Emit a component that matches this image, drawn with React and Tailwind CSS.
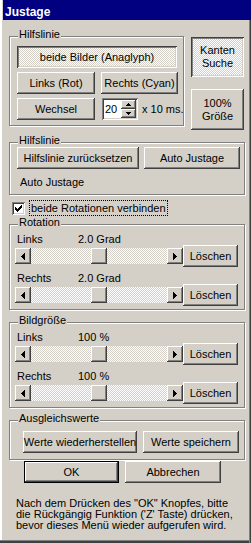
import React from 'react';

const raised = 'shadow-[inset_-1px_-1px_#404040,inset_1px_1px_#fff,inset_-2px_-2px_#808080,inset_2px_2px_#d4d0c8]';
const pressed = 'shadow-[inset_1px_1px_#404040,inset_-1px_-1px_#fff,inset_2px_2px_#808080,inset_-2px_-2px_#d4d0c8]';
const sunken = 'shadow-[inset_1px_1px_#808080,inset_-1px_-1px_#fff,inset_2px_2px_#404040,inset_-2px_-2px_#d4d0c8]';
const dither = 'bg-[image:repeating-conic-gradient(#d4d0c8_0%_25%,#fff_0%_50%)] bg-[length:2px_2px]';

function Btn({ className = '', down = false, children }) {
    return (
        <div className={`flex shrink-0 items-center justify-center whitespace-nowrap text-center leading-[13px] ${down ? `${pressed} ${dither}` : `${raised} bg-[#d4d0c8]`} ${className}`}>
            {children}
        </div>
    );
}

function Group({ title, className = '', children }) {
    return (
        <div className={`relative border border-[#808080] shadow-[inset_1px_1px_#fff,1px_1px_#fff] ${className}`}>
            <span className="absolute left-[8px] top-[-9px] bg-[#d4d0c8] px-[1px] leading-[13px]">{title}</span>
            {children}
        </div>
    );
}

function Arrow({ dir }) {
    return (
        <div className={`flex h-[16px] w-[16px] shrink-0 items-center justify-center bg-[#d4d0c8] ${raised}`}>
            <svg width="4" height="7" viewBox="0 0 4 7" shapeRendering="crispEdges">
                {dir === 'left'
                    ? <path d="M3 0h1v7h-1z M2 1h1v5h-1z M1 2h1v3h-1z M0 3h1v1h-1z" fill="#000" />
                    : <path d="M0 0h1v7h-1z M1 1h1v5h-1z M2 2h1v3h-1z M3 3h1v1h-1z" fill="#000" />}
            </svg>
        </div>
    );
}

function SliderRow() {
    return (
        <div className="flex items-center">
            <div className="flex h-[16px] w-[168px]">
                <Arrow dir="left" />
                <div className={`flex flex-1 justify-center ${dither}`}>
                    <div className={`h-[16px] w-[16px] bg-[#d4d0c8] ${raised}`} />
                </div>
                <Arrow dir="right" />
            </div>
            <Btn className="h-[22px] w-[55px]">Löschen</Btn>
        </div>
    );
}

function SliderLabel({ name, value, className = '' }) {
    return (
        <div className={`ml-[2px] flex leading-[12px] ${className}`}>
            <span className="w-[61px]">{name}</span>
            <span>{value}</span>
        </div>
    );
}

function Spin() {
    return (
        <div className={`flex h-[22px] w-[36px] bg-white p-[2px] ${sunken}`}>
            <div className="flex flex-1 items-center pl-[1px] leading-[13px]">20</div>
            <div className="flex w-[15px] flex-col">
                <div className={`flex h-[9px] items-center justify-center bg-[#d4d0c8] ${raised}`}>
                    <svg width="5" height="3" viewBox="0 0 5 3" shapeRendering="crispEdges"><path d="M2 0h1v1h-1z M1 1h3v1h-3z M0 2h5v1h-5z" fill="#000" /></svg>
                </div>
                <div className={`flex h-[9px] items-center justify-center bg-[#d4d0c8] ${raised}`}>
                    <svg width="5" height="3" viewBox="0 0 5 3" shapeRendering="crispEdges"><path d="M0 0h5v1h-5z M1 1h3v1h-3z M2 2h1v1h-1z" fill="#000" /></svg>
                </div>
            </div>
        </div>
    );
}

export default function App() {
    return (
        <div className="relative flex h-[543px] w-[251px] flex-col overflow-hidden bg-[#d4d0c8] text-[11px] text-black [font-family:'Liberation_Sans',Arial,sans-serif] shadow-[inset_-1px_0_#404040,inset_-2px_0_#808080,inset_0_-1px_#404040,inset_0_-2px_#404040,inset_0_-3px_#808080,inset_2px_0_#fff]">
            {/* title */}
            <div className="ml-[3px] flex h-[20px] shrink-0 items-center bg-[#000080] pl-[2px] pt-[3px] text-[12px] font-bold text-white">
                Justage
            </div>

            {/* top section */}
            <div className="ml-[9px] mt-[16px] flex items-start">
                <Group title="Hilfslinie" className="w-[175px] pb-[5px] pl-[7px] pt-[9px]">
                    <Btn down className="h-[22px] w-[160px]">beide Bilder (Anaglyph)</Btn>
                    <div className="mt-[4px] flex">
                        <Btn className="h-[22px] w-[78px]">Links (Rot)</Btn>
                        <Btn className="ml-[6px] h-[22px] w-[77px]">Rechts (Cyan)</Btn>
                    </div>
                    <div className="mt-[4px] flex items-center">
                        <Btn className="h-[22px] w-[78px]">Wechsel</Btn>
                        <div className="ml-[7px]"><Spin /></div>
                        <span className="ml-[4px] whitespace-nowrap leading-[13px]">x 10 ms.</span>
                    </div>
                </Group>
                <div className="ml-[7px] mt-[1px] flex flex-col">
                    <Btn down className="h-[40px] w-[53px]">Kanten<br />Suche</Btn>
                    <Btn className="mt-[12px] h-[41px] w-[53px]">100%<br />Größe</Btn>
                </div>
            </div>

            {/* Hilfslinie 2 */}
            <Group title="Hilfslinie" className="ml-[9px] mt-[12px] w-[236px] pb-[5px] pl-[7px] pt-[4px]">
                <div className="flex">
                    <Btn className="h-[22px] w-[122px]">Hilfslinie zurücksetzen</Btn>
                    <Btn className="ml-[5px] h-[22px] w-[96px]">Auto Justage</Btn>
                </div>
                <div className="ml-[3px] mt-[7px] leading-[13px]">Auto Justage</div>
            </Group>

            {/* checkbox */}
            <div className="ml-[12px] mt-[5px] flex h-[16px] items-center">
                <div className={`flex h-[13px] w-[13px] items-center justify-center bg-white ${sunken}`}>
                    <svg width="7" height="7" viewBox="0 0 7 7" shapeRendering="crispEdges">
                        <path d="M0 2h1v3h-1z M1 3h1v3h-1z M2 4h1v3h-1z M3 3h1v3h-1z M4 2h1v3h-1z M5 1h1v3h-1z M6 0h1v3h-1z" fill="#000" />
                    </svg>
                </div>
                <div className="ml-[4px] h-[16px] border border-dotted border-black px-[1px] leading-[14px]">beide Rotationen verbinden</div>
            </div>

            {/* Rotation */}
            <Group title="Rotation" className="ml-[9px] mt-[8px] w-[236px] pb-[3px] pl-[5px] pt-[8px]">
                <SliderLabel name="Links" value="2.0 Grad" />
                <SliderRow />
                <SliderLabel name="Rechts" value="2.0 Grad" className="mt-[5px]" />
                <SliderRow />
            </Group>

            {/* Bildgröße */}
            <Group title="Bildgröße" className="ml-[9px] mt-[12px] w-[236px] pb-[3px] pl-[5px] pt-[8px]">
                <SliderLabel name="Links" value="100 %" />
                <SliderRow />
                <SliderLabel name="Rechts" value="100 %" className="mt-[5px]" />
                <SliderRow />
            </Group>

            {/* Ausgleichswerte */}
            <Group title="Ausgleichswerte" className="ml-[9px] mt-[12px] w-[236px] pb-[6px] pl-[13px] pt-[10px]">
                <div className="flex">
                    <Btn className="h-[22px] w-[114px]">Werte wiederherstellen</Btn>
                    <Btn className="ml-[6px] h-[22px] w-[96px]">Werte speichern</Btn>
                </div>
            </Group>

            {/* OK / Abbrechen */}
            <div className="ml-[24px] mt-[1px] flex">
                <Btn className="h-[22px] w-[95px] border border-black">OK</Btn>
                <Btn className="ml-[6px] h-[22px] w-[96px]">Abbrechen</Btn>
            </div>

            <p className="ml-[16px] mt-[15px] whitespace-nowrap leading-[11px]">
                Nach dem Drücken des "OK" Knopfes, bitte<br />
                die Rückgängig Funktion ('Z' Taste) drücken,<br />
                bevor dieses Menü wieder aufgerufen wird.
            </p>
        </div>
    );
}
